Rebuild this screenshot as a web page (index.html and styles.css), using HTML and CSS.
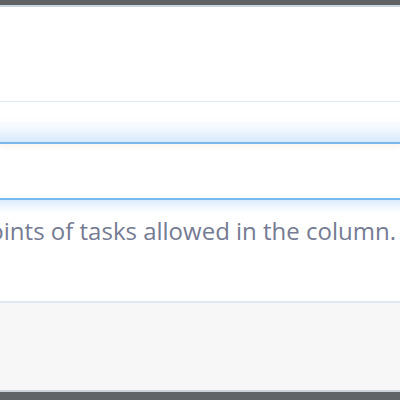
FILE: index.html
```html
<!DOCTYPE html>
<html>
<head>
<meta charset="utf-8">
<link rel="stylesheet" href="styles.css">
</head>
<body>
<div class="modal">
  <div class="modal-top"></div>
  <div class="modal-header"></div>
  <div class="modal-body">
    <div class="field field-focus"></div>
    <div class="gap"></div>
    <div class="field field-next"></div>
    <div class="help"><span>points of tasks allowed in the column.</span></div>
  </div>
  <div class="modal-footer"></div>
  <div class="modal-bottom"></div>
</div>
</body>
</html>
```
FILE: styles.css
```css
html, body {
  margin: 0;
  padding: 0;
  background: #ffffff;
}
.modal {
  width: 400px;
  height: 400px;
  display: flex;
  flex-direction: column;
  overflow: hidden;
  font-family: "Open Sans", "Liberation Sans", sans-serif;
}
.modal-top {
  height: 5px;
  background: #606366;
  border-bottom: 2px solid #c9d5df;
  flex: none;
}
.modal-header {
  height: 94px;
  border-bottom: 1px solid #dde7f0;
  flex: none;
}
.modal-body {
  flex: none;
  height: 199px;
  display: flex;
  flex-direction: column;
}
.field-focus {
  height: 40px;
  background: linear-gradient(to bottom, #ffffff 0%, #ffffff 40%, #f0f7fe 70%, #d6e9fb 100%);
  border-bottom: 2px solid #78b8ee;
  box-shadow: 0 3px 4px rgba(230, 200, 170, 0.18);
  flex: none;
}
.gap {
  height: 54px;
  flex: none;
}
.field-next {
  height: 14px;
  border-top: 2px solid #78b8ee;
  background: linear-gradient(to bottom, #dbebfb 0%, #f3f9ff 60%, #ffffff 100%);
  flex: none;
}
.help {
  display: flex;
  justify-content: flex-end;
  padding-right: 4px;
  margin-top: 1px;
  overflow: hidden;
  white-space: nowrap;
  font-size: 24px;
  line-height: 32px;
  color: #757b93;
}
.modal-footer {
  flex: none;
  height: 87px;
  border-top: 2px solid #dfe8f0;
  background: #f7f7f7;
}
.modal-bottom {
  flex: 1;
  background: #606366;
  border-top: 2px solid #c9d1d8;
}
```
